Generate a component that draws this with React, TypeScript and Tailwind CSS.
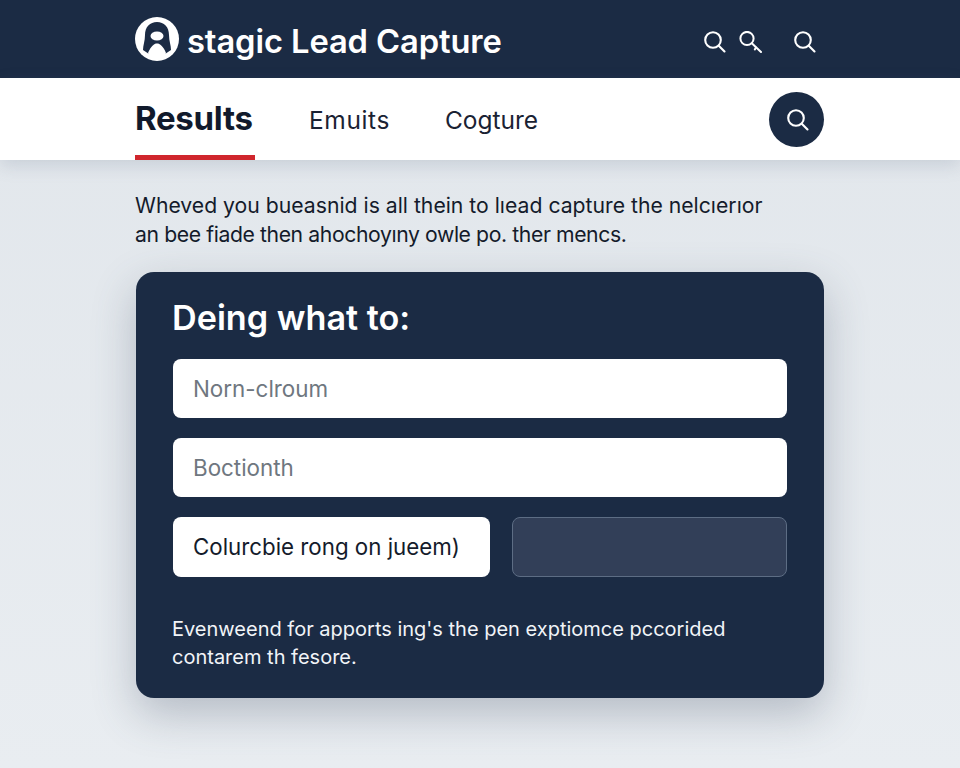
function Logo() {
  return (
    <svg width="44" height="44" viewBox="0 0 44 44" className="shrink-0">
      <circle cx="22" cy="22" r="22" fill="#ffffff" />
      <path d="M8 33 C8 28 10 24 10 18 C10 10 15 5 22 5 C29 5 34 10 34 18 C34 24 36 28 36 33 L30 37 L14 37 Z" fill="#1b2b44" />
      <ellipse cx="22" cy="19" rx="6.5" ry="4.5" fill="#ffffff" />
      <path d="M13 36 C16 29 19 26.5 22 26.5 C25 26.5 28 29 31 36 C28 44 16 44 13 36 Z" fill="#ffffff" />
    </svg>
  );
}

function SearchGlyph({ className }: { className?: string }) {
  return (
    <svg width="22" height="22" viewBox="0 0 22 22" fill="none" stroke="currentColor" strokeWidth="2.1" strokeLinecap="round" className={className}>
      <circle cx="9" cy="9" r="7.8" />
      <path d="M15 15 L20.5 20.5" />
    </svg>
  );
}

function KeySearch() {
  return (
    <svg width="24" height="22" viewBox="0 0 24 22" fill="none" stroke="currentColor" strokeWidth="2" strokeLinecap="round" className="ml-[13px]">
      <circle cx="8" cy="7.5" r="6.6" />
      <path d="M12.8 12.2 L22 21" />
      <path d="M17 16.5 L15.8 18.5" strokeWidth="2" />
    </svg>
  );
}

export default function App() {
  return (
    <div className="h-[768px] w-[960px] overflow-hidden bg-gradient-to-b from-[#e1e6eb] to-[#e9edf1] font-['Inter',sans-serif]">
      <header className="flex h-[78px] items-center bg-[#1b2b44] pl-[135px] pr-[144px]">
        <Logo />
        <span className="ml-[8px] mt-[6px] text-[32.7px] font-semibold tracking-[-0.1px] text-white">stagic Lead Capture</span>
        <div className="ml-auto mt-[5px] flex items-center text-white">
          <SearchGlyph />
          <KeySearch />
          <SearchGlyph className="ml-[31px]" />
        </div>
      </header>

      <nav className="flex h-[82px] items-center bg-white pl-[135px] pr-[136px] shadow-[0_6px_16px_rgba(100,116,139,0.2)]">
        <div className="relative flex h-full w-[120px] items-center">
          <span className="text-[33px] font-bold tracking-[-0.3px] text-[#111a2c]">Results</span>
          <div className="absolute bottom-0 left-0 h-[5px] w-full bg-[#d0262d]" />
        </div>
        <span className="ml-[54px] mt-[3px] text-[24.5px] tracking-[0.6px] text-[#1a2233]">Emuits</span>
        <span className="ml-[55px] mt-[3px] text-[24.5px] text-[#1a2233]">Cogture</span>
        <button className="ml-auto flex h-[55px] w-[55px] items-center justify-center rounded-full bg-[#1b2b44] pl-[3px] pt-[2px] text-white">
          <SearchGlyph />
        </button>
      </nav>

      <main className="ml-[135px] w-[689px] pt-[31px]">
        <p className="text-[21.2px] leading-[29px] text-[#141b2b]">
          Wheved you bueasnid is all thein to lıead capture the nelcıerıor
          <br />
          <span className="tracking-[-0.4px]">an bee fiade then ahochoyıny owle po. ther mencs.</span>
        </p>

        <section className="ml-px mt-[23px] h-[426px] rounded-[18px] bg-[#1b2b44] px-[37px] pt-[26px] shadow-[0_16px_44px_rgba(71,85,105,0.32)]">
          <h2 className="-ml-px text-[34.2px] font-semibold leading-[40px] text-white">Deing what to:</h2>
          <div className="mt-[21px] flex h-[59px] items-center rounded-[8px] bg-white px-[20px] text-[22.4px] text-[#6f7780]">
            Norn-clroum
          </div>
          <div className="mt-[20px] flex h-[59px] items-center rounded-[8px] bg-white px-[20px] text-[22.4px] text-[#6f7780]">
            Boctionth
          </div>
          <div className="mt-[20px] flex h-[60px] gap-[22px]">
            <div className="flex w-[317px] items-center rounded-[8px] bg-white px-[20px] text-[22.3px] text-[#141b2b]">
              Colurcbie rong on jueem)
            </div>
            <div className="flex-1 rounded-[8px] border border-[#5d6d84] bg-[#323f58]" />
          </div>
          <p className="-ml-px mt-[38px] text-[20px] leading-[28px] text-[#f1f4f8]">
            Evenweend for apports ing's the pen exptiomce pccorided
            <br />
            contarem th fesore.
          </p>
        </section>
      </main>
    </div>
  );
}
